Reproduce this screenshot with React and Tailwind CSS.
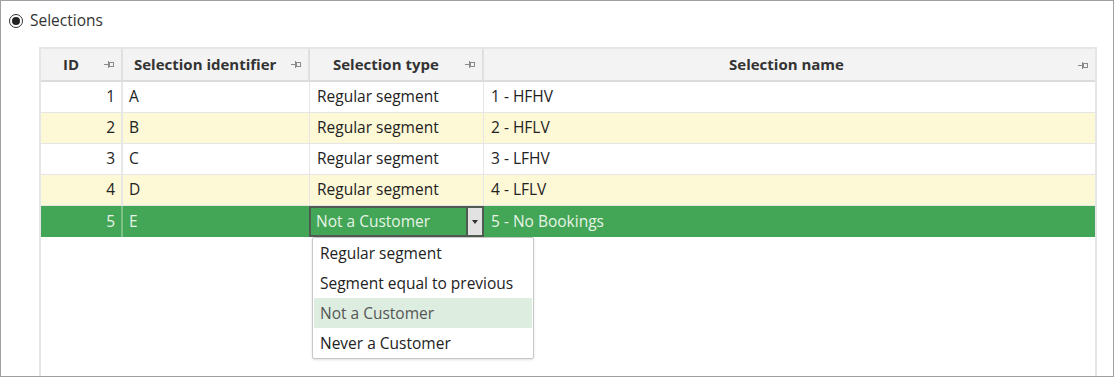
import React from "react";

const Pin = () => (
  <svg width="11" height="9" viewBox="0 0 11 9" className="shrink-0">
    <line x1="0" y1="4.5" x2="4" y2="4.5" stroke="#8a8a8a" strokeWidth="1" />
    <line x1="4.5" y1="1" x2="4.5" y2="8" stroke="#8a8a8a" strokeWidth="1" />
    <rect x="5.5" y="2.5" width="4" height="4" fill="none" stroke="#8a8a8a" strokeWidth="1" />
  </svg>
);

const rows = [
  { id: 1, ident: "A", type: "Regular segment", name: "1 - HFHV", bg: "bg-white" },
  { id: 2, ident: "B", type: "Regular segment", name: "2 - HFLV", bg: "bg-[#fdf8d6]" },
  { id: 3, ident: "C", type: "Regular segment", name: "3 - LFHV", bg: "bg-white" },
  { id: 4, ident: "D", type: "Regular segment", name: "4 - LFLV", bg: "bg-[#fdf8d6]" },
];

export default function App() {
  return (
    <div
      className="w-[1114px] h-[377px] border border-[#a0a0a0] bg-white text-[15.5px] text-[#222] relative overflow-hidden"
      style={{ fontFamily: '"Open Sans", "Noto Sans", sans-serif' }}
    >
      <div className="flex items-center h-[40px] pl-[8px] pb-[1px]">
        <div className="w-[14px] h-[14px] rounded-full border border-[#333] flex items-center justify-center">
          <div className="w-[8px] h-[8px] rounded-full bg-[#222]" />
        </div>
        <span className="ml-[7px] text-[#333]">Selections</span>
      </div>
      <div className="ml-[38px] mt-[6px] mr-[16px] h-[400px] border-2 border-[#e6e6e6] border-b-0 relative">
        <div className="grid grid-cols-[82px_187px_174px_1fr] h-[33px] bg-[#f3f3f3] border-b-2 border-[#dcdcdc] font-bold text-[15px] text-[#333]">
          <div className="flex items-center justify-between pl-[22px] pr-[6px] border-r-2 border-[#e0e0e0]">
            <span>ID</span><Pin />
          </div>
          <div className="flex items-center justify-between pl-[11px] pr-[6px] border-r-2 border-[#e0e0e0]">
            <span>Selection identifier</span><Pin />
          </div>
          <div className="flex items-center justify-between pl-[23px] pr-[6px] border-r-2 border-[#e0e0e0]">
            <span>Selection type</span><Pin />
          </div>
          <div className="flex items-center justify-center relative pr-[6px]">
            <span>Selection name</span>
            <div className="absolute right-[6px] top-[12px]"><Pin /></div>
          </div>
        </div>
        {rows.map((r) => (
          <div key={r.id} className={`grid grid-cols-[82px_187px_174px_1fr] h-[31px] border-b border-[#e6e6e6] ${r.bg}`}>
            <div className="flex items-center justify-end pr-[6px] border-r-2 border-[#e6e6e6]">{r.id}</div>
            <div className="flex items-center pl-[6px] border-r border-[#e6e6e6]">{r.ident}</div>
            <div className="flex items-center pl-[7px] border-r border-[#e6e6e6]">{r.type}</div>
            <div className="flex items-center pl-[7px]">{r.name}</div>
          </div>
        ))}
        <div className="grid grid-cols-[82px_187px_174px_1fr] h-[31px] bg-[#43a556] text-[#e6f4e6]">
          <div className="flex items-center justify-end pr-[6px] border-r-2 border-[#7cc288]">5</div>
          <div className="flex items-center pl-[6px]">E</div>
          <div className="flex items-center border-2 border-[#4f5a50] -ml-[1px]">
            <span className="pl-[5px] flex-1">Not a Customer</span>
            <div className="w-[16px] h-full bg-[#e2e2e2] border-l-2 border-[#4f5a50] flex items-center justify-center">
              <div className="w-0 h-0 border-l-[3px] border-r-[3px] border-t-[4px] border-l-transparent border-r-transparent border-t-[#333]" />
            </div>
          </div>
          <div className="flex items-center pl-[7px]">5 - No Bookings</div>
        </div>
        <div className="absolute left-[271px] top-[188px] w-[222px] bg-white border border-[#c8c8c8] rounded-[2px] shadow-sm px-[1px]">
          {["Regular segment", "Segment equal to previous", "Not a Customer", "Never a Customer"].map((t, i) => (
            <div key={t} className={`h-[30px] flex items-center pl-[6px] pt-[2px] ${i === 2 ? "bg-[#ddede0] text-[#555]" : "text-[#222]"}`}>{t}</div>
          ))}
        </div>
      </div>
    </div>
  );
}
